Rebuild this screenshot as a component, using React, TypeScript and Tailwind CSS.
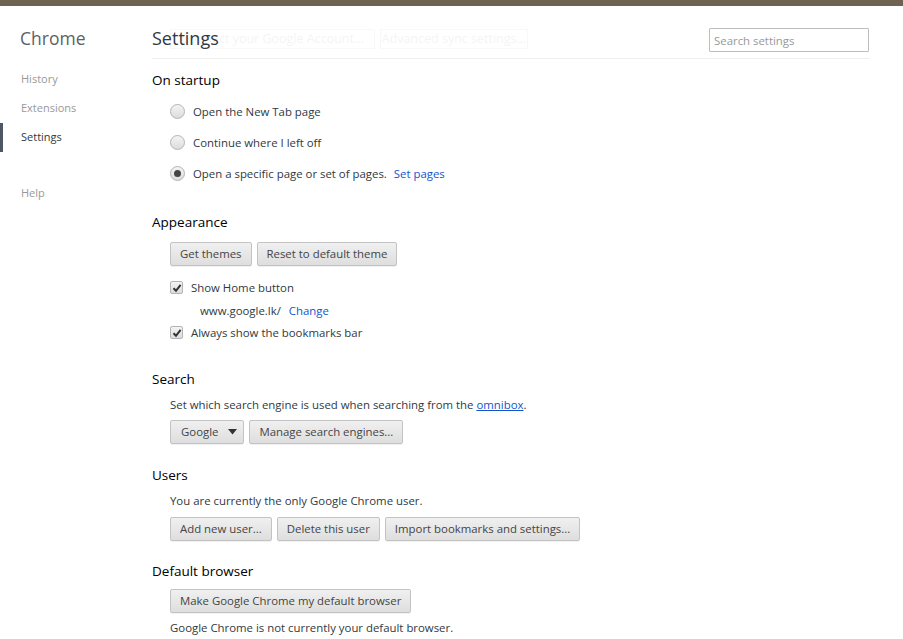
import { useState } from "react";

const font = { fontFamily: '"Open Sans", "Noto Sans", sans-serif' };

const Button = ({ children, className = "" }: { children: React.ReactNode; className?: string }) => (
  <button
    className={`h-[24px] px-[9px] rounded-[2px] border border-[#c3c3c3] bg-gradient-to-b from-[#f0f0f0] to-[#dedede] text-[11.4px] text-[#444] shadow-[0_1px_0_rgba(0,0,0,0.06)] whitespace-nowrap ${className}`}
  >
    {children}
  </button>
);

const Radio = ({ checked }: { checked?: boolean }) => (
  <span className="flex h-[15px] w-[15px] items-center justify-center rounded-full border border-[#b4b4b4] bg-gradient-to-b from-[#f4f4f4] to-[#dcdcdc]">
    {checked && <span className="h-[7px] w-[7px] rounded-full bg-[#444]" />}
  </span>
);

const Check = () => (
  <span className="flex h-[13px] w-[13px] items-center justify-center rounded-[2px] border border-[#b4b4b4] bg-gradient-to-b from-[#f4f4f4] to-[#dcdcdc]">
    <svg width="10" height="10" viewBox="0 0 10 10">
      <path d="M1.5 5.2 L4 7.8 L8.6 1.8" fill="none" stroke="#333" strokeWidth="2" />
    </svg>
  </span>
);

const Section = ({ title, children, className = "" }: { title: string; children: React.ReactNode; className?: string }) => (
  <section className={className}>
    <h3 className="text-[13.5px] leading-[20px] text-[#000]">{title}</h3>
    <div className="pl-[18px]">{children}</div>
  </section>
);

export default function App() {
  const [startup, setStartup] = useState(2);
  const nav = ["History", "Extensions", "Settings"];

  return (
    <div className="min-h-screen bg-white text-[#303942]" style={font}>
      <div className="h-[6px] bg-[#6e6352]" />
      <div className="flex">
        <aside className="w-[152px] shrink-0">
          <h1 className="pl-[20px] pt-[20px] text-[17.5px] leading-[24px] text-[#5c6166]">Chrome</h1>
          <ul className="mt-[15px] text-[11px]">
            {nav.map((n) => (
              <li
                key={n}
                className={`h-[29px] flex items-center pl-[18px] border-l-[3px] ${
                  n === "Settings" ? "border-[#4e5764] text-[#303942]" : "border-transparent text-[#999]"
                }`}
              >
                {n}
              </li>
            ))}
            <li className="mt-[27px] h-[29px] flex items-center pl-[21px] text-[#999]">Help</li>
          </ul>
        </aside>

        <main className="w-[717px] text-[11.4px] text-[#303942]">
          <header className="relative flex h-[53px] items-start justify-between border-b border-[#eeeeee]">
            <h2 className="mt-[20px] text-[18px] leading-[24px] text-[#303942]">Settings</h2>
            <div className="pointer-events-none absolute left-[18px] top-[23px] flex gap-[5px] opacity-[0.05] whitespace-nowrap">
              <span className="flex h-[20px] w-[205px] items-center justify-center border border-[#888] text-[12.5px]">Connect your Google Account...</span>
              <span className="flex h-[20px] w-[148px] items-center justify-center border border-[#888] text-[12.5px]">Advanced sync settings...</span>
            </div>
            <input
              placeholder="Search settings"
              className="mt-[22px] h-[24px] w-[160px] border border-[#bdbdbd] rounded-[1px] px-[4px] text-[11.4px] placeholder:text-[#999] outline-none"
            />
          </header>

          <Section title="On startup" className="mt-[11px]">
            <div className="mt-[12px] flex flex-col gap-[12px]">
              {["Open the New Tab page", "Continue where I left off", "Open a specific page or set of pages."].map((t, i) => (
                <label key={t} className="flex h-[19px] items-center gap-[8px] cursor-pointer" onClick={() => setStartup(i)}>
                  <Radio checked={startup === i} />
                  <span>{t}</span>
                  {i === 2 && <a className="-ml-[1px] text-[#15c]">Set pages</a>}
                </label>
              ))}
            </div>
          </Section>

          <Section title="Appearance" className="mt-[29px]">
            <div className="mt-[10px] flex gap-[5px]">
              <Button>Get themes</Button>
              <Button>Reset to default theme</Button>
            </div>
            <div className="mt-[12px] flex h-[19px] items-center gap-[8px]">
              <Check />
              <span>Show Home button</span>
            </div>
            <div className="mt-[4px] flex h-[19px] items-center gap-[8px] pl-[30px]">
              <span>www.google.lk/</span>
              <a className="text-[#15c]">Change</a>
            </div>
            <div className="mt-[3px] flex h-[19px] items-center gap-[8px]">
              <Check />
              <span>Always show the bookmarks bar</span>
            </div>
          </Section>

          <Section title="Search" className="mt-[27px]">
            <p className="mt-[6px] leading-[19px]">
              Set which search engine is used when searching from the{" "}
              <a className="text-[#15c] underline">omnibox</a>.
            </p>
            <div className="mt-[6px] flex gap-[5px]">
              <Button className="flex items-center gap-[10px] pl-[10px] pr-[6px]">
                Google
                <svg width="9" height="6" viewBox="0 0 9 6">
                  <path d="M0 0 H9 L4.5 5.5 Z" fill="#333" />
                </svg>
              </Button>
              <Button>Manage search engines...</Button>
            </div>
          </Section>

          <Section title="Users" className="mt-[21px]">
            <p className="mt-[6px] leading-[19px]">You are currently the only Google Chrome user.</p>
            <div className="mt-[7px] flex gap-[5px]">
              <Button>Add new user...</Button>
              <Button>Delete this user</Button>
              <Button>Import bookmarks and settings...</Button>
            </div>
          </Section>

          <Section title="Default browser" className="mt-[20px]">
            <div className="mt-[8px] flex">
              <Button>Make Google Chrome my default browser</Button>
            </div>
            <p className="mt-[5px] leading-[19px]">Google Chrome is not currently your default browser.</p>
          </Section>
        </main>
      </div>
    </div>
  );
}
